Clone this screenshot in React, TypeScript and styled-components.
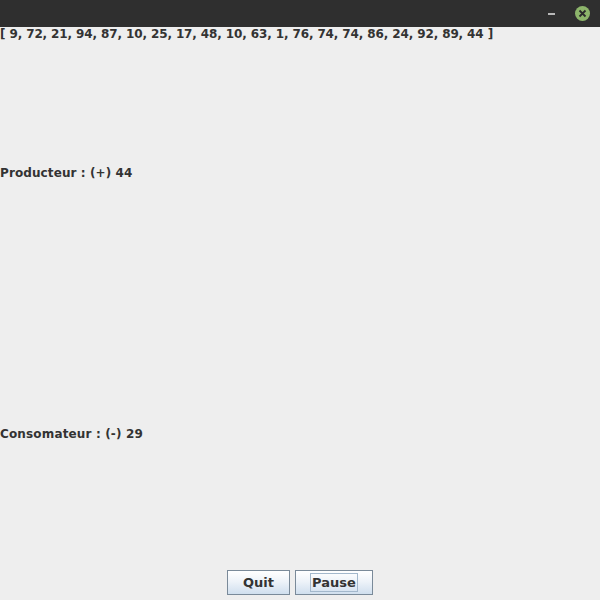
import React from "react";
import styled, { createGlobalStyle } from "styled-components";

const Global = createGlobalStyle`
  html, body { margin: 0; padding: 0; background: #eeeeee; }
  body { font-family: "DejaVu Sans", sans-serif; }
`;

const Window = styled.div`
  width: 600px;
  height: 600px;
  display: flex;
  flex-direction: column;
  background: #eeeeee;
  overflow: hidden;
`;

const TitleBar = styled.div`
  height: 27px;
  flex: 0 0 27px;
  background: #2f2f2f;
  display: flex;
  align-items: center;
  justify-content: flex-end;
  gap: 20px;
  padding-right: 10px;
  box-sizing: border-box;
`;

const MinBtn = styled.div`
  width: 7px;
  height: 2px;
  background: #b8b8b8;
`;

const CloseBtn = styled.div`
  width: 15px;
  height: 15px;
  border-radius: 50%;
  background: #8db56b;
  display: flex;
  align-items: center;
  justify-content: center;
`;

const Content = styled.div`
  flex: 1;
  display: flex;
  flex-direction: column;
`;

const Label = styled.div<{ $ls?: number }>`
  font-family: "DejaVu Sans", sans-serif;
  font-weight: bold;
  font-size: 12px;
  color: #333333;
  line-height: 15px;
  white-space: pre;
  letter-spacing: ${(p) => p.$ls ?? 0}px;
`;

const Header = styled(Label)`
  padding-bottom: 1px;
`;

const Center = styled.div`
  flex: 1;
  display: grid;
  grid-template-rows: 1fr 1fr;
`;

const Cell = styled.div`
  display: flex;
  align-items: center;
`;

const South = styled.div`
  height: 35px;
  flex: 0 0 35px;
  display: flex;
  justify-content: center;
  align-items: flex-start;
  gap: 5px;
  padding-top: 5px;
  box-sizing: border-box;
`;

const Button = styled.button<{ $w: number }>`
  width: ${(p) => p.$w}px;
  height: 25px;
  margin: 0;
  padding: 0;
  border: 1px solid #7a8a99;
  background: linear-gradient(to bottom, #ffffff 0%, #eef3f9 45%, #d0dfee 100%);
  font-family: "DejaVu Sans", sans-serif;
  font-weight: bold;
  font-size: 13px;
  color: #333333;
  display: flex;
  align-items: center;
  justify-content: center;
  box-sizing: border-box;
`;

const Focus = styled.span`
  border: 1px solid #a3b8cc;
  padding: 0 1px;
  line-height: 17px;
`;

export default function App() {
  return (
    <>
      <Global />
      <Window>
        <TitleBar>
          <MinBtn />
          <CloseBtn>
            <svg width="9" height="9" viewBox="0 0 9 9">
              <path d="M1.5 1.5 L7.5 7.5 M7.5 1.5 L1.5 7.5" stroke="#2b2b2b" strokeWidth="1.8" />
            </svg>
          </CloseBtn>
        </TitleBar>
        <Content>
          <Header $ls={-0.12}>[ 9, 72, 21, 94, 87, 10, 25, 17, 48, 10, 63, 1, 76, 74, 74, 86, 24, 92, 89, 44 ]</Header>
          <Center>
            <Cell>
              <Label $ls={0.1}>Producteur : (+) 44</Label>
            </Cell>
            <Cell>
              <Label $ls={0.15}>Consomateur : (-) 29</Label>
            </Cell>
          </Center>
          <South>
            <Button $w={63}>Quit</Button>
            <Button $w={78}>
              <Focus>Pause</Focus>
            </Button>
          </South>
        </Content>
      </Window>
    </>
  );
}
